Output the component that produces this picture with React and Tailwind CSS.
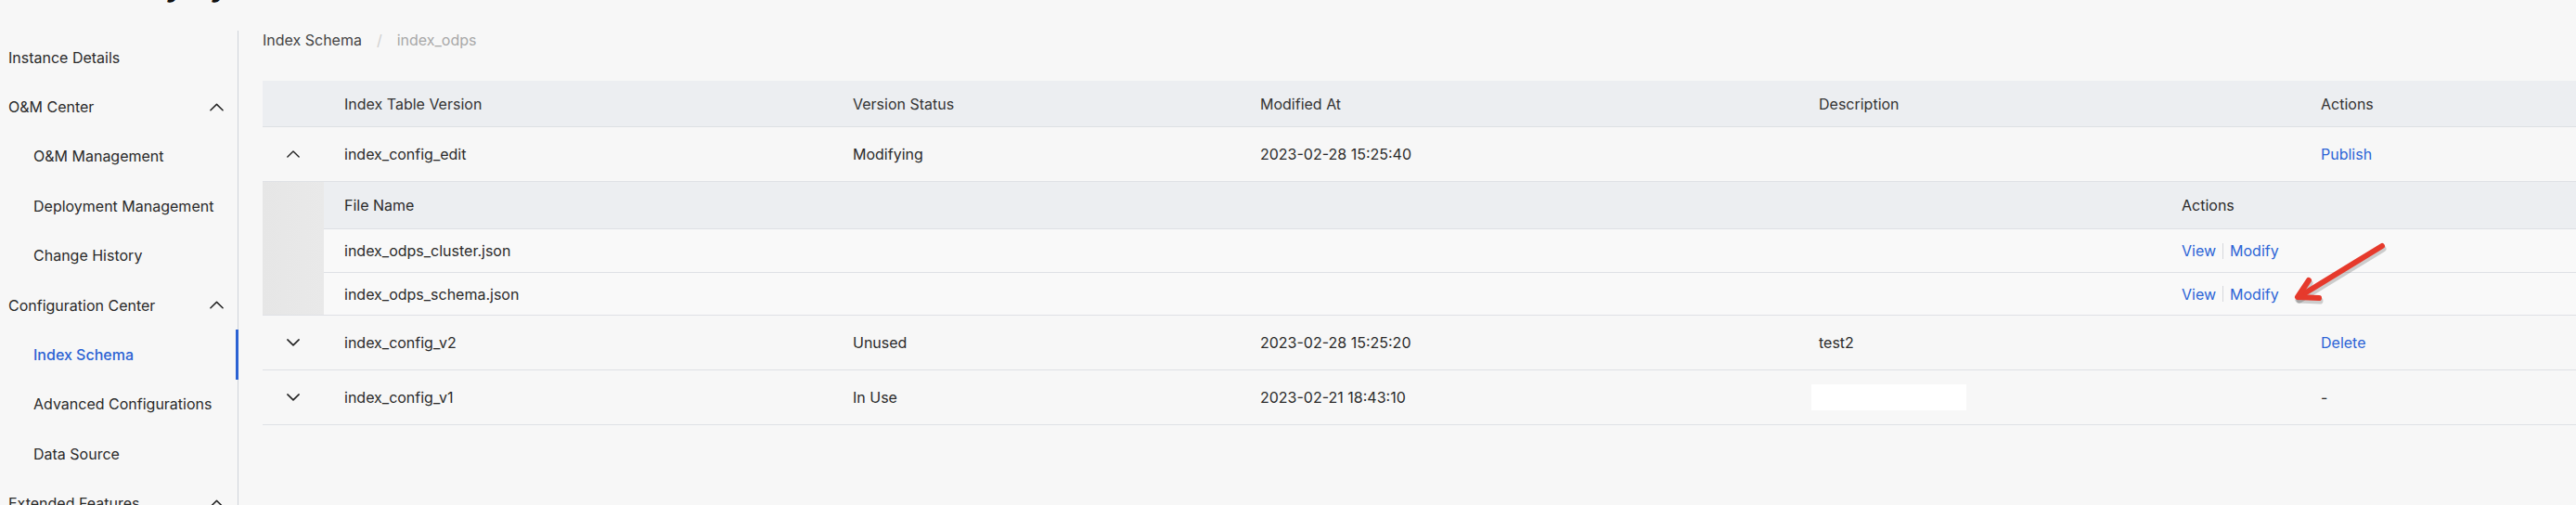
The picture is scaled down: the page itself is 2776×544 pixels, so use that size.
const font = "font-['Inter','Noto_Sans',sans-serif]";

function UpIcon({ className = "w-[15px] h-[9px]" }) {
  return (
    <svg viewBox="0 0 16 9" className={className} fill="none" stroke="#222" strokeWidth="1.6" strokeLinecap="round" strokeLinejoin="round">
      <polyline points="1,8 8,1.2 15,8" />
    </svg>
  );
}

function DownIcon({ className = "w-[14px] h-[8px]" }) {
  return (
    <svg viewBox="0 0 16 9" className={className} fill="none" stroke="#222" strokeWidth="1.8" strokeLinecap="round" strokeLinejoin="round">
      <polyline points="1,1 8,7.8 15,1" />
    </svg>
  );
}

const nav = [
  { label: "Instance Details", group: true },
  { label: "O&M Center", group: true, caret: true },
  { label: "O&M Management" },
  { label: "Deployment Management" },
  { label: "Change History" },
  { label: "Configuration Center", group: true, caret: true },
  { label: "Index Schema", active: true },
  { label: "Advanced Configurations" },
  { label: "Data Source" },
  { label: "Extended Features", group: true, caret: true },
];

const cols = "grid grid-cols-[66px_548px_439px_602px_541px_1fr]";

function Sidebar() {
  return (
    <aside className="w-[257px] shrink-0 border-r border-[#cfd3da] pt-[2px]">
      {nav.map((item) => (
        <div
          key={item.label}
          className={`relative flex items-center justify-between h-[53.4px] pr-[15px] text-[16px] ${item.group ? "pl-[9px]" : "pl-[36px]"} ${item.active ? "text-[#2b62d3] font-medium" : "text-[#2a2a2a]"}`}
        >
          <span>{item.label}</span>
          {item.caret && <UpIcon />}
          {item.active && <span className="absolute right-[-1px] top-0 bottom-0 w-[3px] bg-[#2b62d3]" />}
        </div>
      ))}
    </aside>
  );
}

function Link({ children }) {
  return <span className="text-[#2c64d6]">{children}</span>;
}

function Row({ open, name, status, time, desc, action }) {
  return (
    <div className={`${cols} h-[59px] items-center border-b border-[#dfe1e5] text-[16px]`}>
      <div className="flex justify-center">{open ? <UpIcon className="w-[14px] h-[8px]" /> : <DownIcon />}</div>
      <div className="pl-[22px]">{name}</div>
      <div className="pl-[22px]">{status}</div>
      <div className="pl-[22px]">{time}</div>
      <div className="pl-[22px]">{desc}</div>
      <div className="pl-[22px]">{action}</div>
    </div>
  );
}

function FileRow({ name, h, last }) {
  return (
    <div className={`grid grid-cols-[1980px_1fr] ${h} items-center bg-[#f9f9f9] ${last ? "" : "border-b border-[#dfe1e5]"}`}>
      <div className="pl-[22px]">{name}</div>
      <div className="pl-[22px] flex items-center">
        <Link>View</Link>
        <span className="mx-[7px] w-px h-[17px] bg-[#d6d8dc]" />
        <Link>Modify</Link>
      </div>
    </div>
  );
}

export default function App() {
  return (
    <div className={`relative w-[2776px] h-[544px] overflow-hidden bg-[#f7f7f7] text-[#2a2a2a] ${font}`}>
      {/* page title, scrolled mostly out of view */}
      <div className="h-[33px] pl-[9px] overflow-hidden">
        <h1 className="-mt-[31px] text-[32px] leading-[32px] font-bold text-[#111]">Index Policy Sync</h1>
      </div>
      <div className="flex h-[511px]">
        <Sidebar />
        <main className="flex-1 pl-[26px]">
          <div className="h-[20px] flex items-center text-[16px]">
            <span className="text-[#444]">Index Schema</span>
            <span className="mx-[16px] text-[#cfcfcf]">/</span>
            <span className="text-[#a8a8a8]">index_odps</span>
          </div>
          <div className="mt-[34px] text-[16px]">
            <div className={`${cols} h-[50px] items-center bg-[#eceef1] border-b border-[#dde0e4] text-[#333]`}>
              <div />
              <div className="pl-[22px]">Index Table Version</div>
              <div className="pl-[22px]">Version Status</div>
              <div className="pl-[22px]">Modified At</div>
              <div className="pl-[22px]">Description</div>
              <div className="pl-[22px]">Actions</div>
            </div>
            <Row open name="index_config_edit" status="Modifying" time="2023-02-28 15:25:40" desc="" action={<Link>Publish</Link>} />
            <div className="flex border-b border-[#dfe1e5]">
              <div className="w-[66px] shrink-0 bg-gradient-to-r from-[#e6e6e6] to-[#e9e9e9]" />
              <div className="flex-1">
                <div className="grid grid-cols-[1980px_1fr] h-[51px] items-center bg-[#eceef1] border-b border-[#dde0e4]">
                  <div className="pl-[22px]">File Name</div>
                  <div className="pl-[22px]">Actions</div>
                </div>
                <FileRow name="index_odps_cluster.json" h="h-[47px]" />
                <FileRow name="index_odps_schema.json" h="h-[45px]" last />
              </div>
            </div>
            <Row name="index_config_v2" status="Unused" time="2023-02-28 15:25:20" desc="test2" action={<Link>Delete</Link>} />
            <Row
              name="index_config_v1"
              status="In Use"
              time="2023-02-21 18:43:10"
              desc={<div className="-ml-[8px] w-[167px] h-[28px] bg-white" />}
              action="-"
            />
          </div>
        </main>
      </div>
      {/* red annotation arrow */}
      <svg className="absolute left-[2440px] top-[240px] w-[160px] h-[100px]" viewBox="0 0 160 100" fill="none">
        <g stroke="rgba(0,0,0,0.18)" strokeWidth="7" strokeLinecap="round" strokeLinejoin="round" transform="translate(1,3)">
          <line x1="127" y1="25" x2="37" y2="80" />
          <polyline points="48,62 36,80 59,81" />
        </g>
        <g stroke="#e63a2c" strokeWidth="6" strokeLinecap="round" strokeLinejoin="round">
          <line x1="127" y1="25" x2="37" y2="80" />
          <polyline points="48,62 36,80 59,81" />
        </g>
      </svg>
    </div>
  );
}
